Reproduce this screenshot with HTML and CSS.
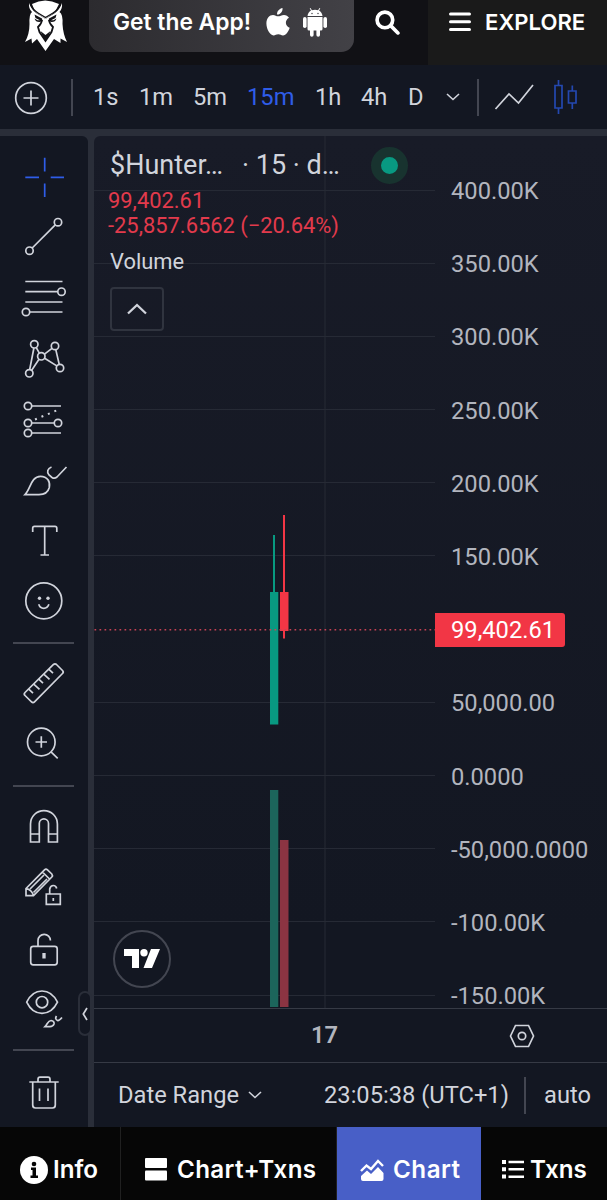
FILE: index.html
```
<!DOCTYPE html>
<html lang="en">
<head>
  <meta charset="UTF-8">
  <meta name="viewport" content="width=device-width, initial-scale=1">
  <title>$Hunter Chart</title>
  <link rel="stylesheet" href="styles.css">
</head>
<body>

  <header class="header">
    <svg class="logo" viewBox="0 0 44 54">
      <path fill="#fff" d="M8 4 Q21 -3 35 4 L31 12 L21.500 19 L11 12Z"/>
      <path fill="#fff" d="M5 3 Q7 9 12 13 L21.500 19 L31 13 Q36 9 38 3 Q38.500 9 35.500 12 Q39 14 38.500 24 Q39 34 43 42 L36.500 38.500 V43 L30 39 L21.500 51 L13 39 L8 43.500 L7.500 38.500 L1 42 Q5.500 34 5.500 24 Q5 14 8 12 Q4.500 9 5 3Z"/>
      <path fill="none" stroke="#111115" stroke-width="1.3" d="M6.500 4 Q9 10 14 13 L21.500 17.500 L29 13 Q34 10 36.500 4"/>
      <path fill="#111115" d="M10.500 14.500 L18 18.500 L18.500 21 L15.500 22 Q11.500 22 10.500 18.500 L13.500 20.300 H16 L11.500 18Z M32.500 14.500 L25 18.500 L24.500 21 L27.500 22 Q31.500 22 32.500 18.500 L29.500 20.300 H27 L31.500 18Z"/>
      <path fill="none" stroke="#111115" stroke-width="1.8" d="M18 20 Q17.500 24 14 27 L15.500 32 L21.500 41 L27.500 32 L29 27 Q25.500 24 25 20"/>
      <path fill="#111115" d="M16.500 31 L21.500 35 L26.500 31 L24 37 L21.500 41 L19 37Z"/>
    </svg>
    <a class="app-button">
      <span class="app-label">Get the App!</span>
      <svg class="apple" viewBox="0 0 24 28"><path d="M16.500 0 C17 3.500 14 7 11 6.500 C11 3 13.500 .8 16.500 0Z M12 8.300 C14 8.300 15.500 6.900 18 6.900 C20 6.900 22 8 23 9.700 C18.500 12.200 19 18 23.700 19.800 C22.500 23.500 20 27.400 17 27.400 C15 27.400 14.500 26.200 12.300 26.200 C10 26.200 9.500 27.400 7.500 27.400 C4 27.400 .4 21 .4 15.500 C.4 10 3.500 6.900 7 6.900 C9 6.900 10.500 8.300 12 8.300Z"/></svg>
      <svg class="android" viewBox="0 0 26 29"><path d="M5.500 8 Q6 4 9 2.500 L7.700 .5 L8.500 0 L9.900 2.200 Q13 1.200 16.100 2.200 L17.500 0 L18.300 .5 L17 2.500 Q20 4 20.500 8Z M5.500 9 H20.500 V21 Q20.500 22.500 19 22.500 H18 V27 A1.800 1.800 0 0 1 14.400 27 V22.500 H11.600 V27 A1.800 1.800 0 0 1 8 27 V22.500 H7 Q5.500 22.500 5.500 21Z"/><rect x="1" y="9" width="3.600" height="11" rx="1.800"/><rect x="21.400" y="9" width="3.600" height="11" rx="1.800"/><circle cx="10" cy="5.500" r=".7" fill="#3a3a3f"/><circle cx="16" cy="5.500" r=".7" fill="#3a3a3f"/></svg>
    </a>
    <svg class="search" viewBox="0 0 24 24"><circle cx="9.500" cy="9.500" r="7.500"/><path d="M15 15 L22 22"/></svg>
    <a class="explore">
      <svg class="burger" viewBox="0 0 22 20"><path d="M1.500 2 H20.500 M1.500 9.700 H20.500 M1.500 17.500 H20.500"/></svg>
      <span>EXPLORE</span>
    </a>
  </header>

  <div class="toolbar">
    <svg class="add" viewBox="0 0 34 34"><circle cx="17" cy="17" r="15.300"/><path d="M9.500 17 H24.500 M17 9.500 V24.500"/></svg>
    <i class="divider"></i>
    <div class="intervals">
      <span>1s</span><span>1m</span><span>5m</span><span class="active">15m</span><span>1h</span><span>4h</span><span>D</span>
      <svg class="chevron" viewBox="0 0 14 8"><path d="M1 1 L7 6.500 L13 1"/></svg>
    </div>
    <i class="divider"></i>
    <svg class="line-type" viewBox="0 0 40 28"><path d="M1.500 26 L15 11 L24.500 20 L39 2"/></svg>
    <svg class="candle-type" viewBox="0 0 26 36"><path d="M2 6.500 H9 V29 H2Z M5.500 1 V6.500 M5.500 29 V35 M15.500 12 H23 V24 H15.500Z M19.300 6.500 V12 M19.300 24 V30"/></svg>
  </div>

  <main class="workspace">
    <aside class="rail">
      <svg class="cross" viewBox="0 0 88 60.700"><path d="M44.700 10.700 V24.400 M44.700 36.400 V50.100 M25.300 30.400 H39 M50.700 30.400 H64"/></svg>
      <svg viewBox="0 0 88 60.700"><circle cx="58" cy="15.200" r="3.700"/><circle cx="29.500" cy="43.700" r="3.700"/><path d="M32.200 41 L55.300 17.900"/></svg>
      <svg viewBox="0 0 88 60.700"><path d="M25.300 13.500 H62.500 M25.300 23.700 H57.700 M25.300 34 H62.500 M29.800 44 H62.500"/><circle cx="61.500" cy="23.700" r="3.700"/><circle cx="26" cy="44" r="3.700"/></svg>
      <svg viewBox="0 0 88 60.700"><path d="M33.900 19 L29.700 40.500 M36.300 18.600 L39.300 24.200 M44.500 25.200 L52 19.300 M55.800 20.600 L59.200 35.200 M44.600 29.300 L56.800 36.900 M39 30.300 L31.700 41.200"/><circle cx="34.300" cy="15.300" r="3.700"/><circle cx="55" cy="17" r="3.700"/><circle cx="41.300" cy="27.300" r="3.700"/><circle cx="29.300" cy="44.300" r="3.700"/><circle cx="60" cy="39" r="3.700"/></svg>
      <svg viewBox="0 0 88 60.700"><path d="M31.700 17 H61 M31.700 34 H54.300 M31.700 44 H61"/><path stroke-dasharray="2 5" stroke-width="2" d="M35 30.500 L60 20"/><circle cx="28" cy="17" r="3.700"/><circle cx="28" cy="34" r="3.700"/><circle cx="58" cy="34" r="3.700"/><circle cx="28" cy="44" r="3.700"/></svg>
      <svg viewBox="0 0 88 60.700"><path d="M25 44.600 C30.500 39 31 26.500 40.500 26.300 C47.500 26.300 50.500 32 49.300 37.500 C48 42.500 44 44.600 39 44.600Z M51.500 17 C47.500 18.500 46.500 22 49 25 L52 27.500 C53.500 28.500 55.500 28.300 57 27 L66.500 17"/></svg>
      <svg viewBox="0 0 88 60.700"><path d="M32.700 21 V17 Q32.700 15.300 34.500 15.300 H55 Q56.800 15.300 56.800 17 V21 M44.700 15.300 V44 M40.500 44 H49"/></svg>
      <svg viewBox="0 0 88 60.700"><circle cx="43.800" cy="29.800" r="18"/><path d="M38.700 33.300 Q40 37.300 43.800 37.300 Q47.500 37.300 48.900 33.300"/><circle class="solid" cx="39.500" cy="27.300" r="1.700"/><circle class="solid" cx="48" cy="27.300" r="1.700"/></svg>
      <hr>
      <svg viewBox="0 0 88 60.700"><path d="M25 39.500 L53.500 11.500 Q55 10.200 56.500 11.500 L62.500 17.500 Q64 19 62.500 20.500 L34.500 48.800 Q33 50.200 31.500 48.800 L25 42.500 Q23.500 41 25 39.500Z M29 36.500 L33 40.200 M34 31.500 L39.500 36.500 M39 26.500 L43 30.200 M44 21.500 L49.500 26.500 M49 16.500 L53 20.200"/></svg>
      <svg viewBox="0 0 88 60.700"><circle cx="41.300" cy="28" r="13.800"/><path d="M35.500 28 H47 M41.300 22.300 V33.700 M51 38 L57.700 44.300"/></svg>
      <hr>
      <svg viewBox="0 0 88 60.700"><path d="M30.500 46 V28 A13.400 13.400 0 0 1 57.400 28 V46 H48.500 V27.500 A4.600 4.600 0 0 0 39.300 27.500 V46Z M30.500 38 H39.300 M48.500 38 H57.400"/></svg>
      <svg viewBox="0 0 88 60.700"><path d="M26 38.700 V31.500 L44.500 12.800 Q46 11.500 47.500 12.800 L51.800 17 Q53 18.500 51.800 20 L33.500 38.700Z M26.500 31.500 Q31.500 33 33.500 38.200 M42.500 15 L49.500 22 M30 32 L44 18 M33.500 35.500 L47 22 M46.300 37 H60.300 V47.300 H46.300Z M49.700 37 V32 Q50.500 28.500 53.300 28.500 Q56 28.500 56.700 31.500 M53.300 41 V44"/></svg>
      <svg viewBox="0 0 88 60.700"><rect x="30.700" y="28.300" width="26.500" height="18.500" rx="2.500"/><path d="M38 28 V22.500 A6.200 6.200 0 0 1 50.400 22.500"/><path stroke-width="3.300" d="M44 35 V40.500"/></svg>
      <svg viewBox="0 0 88 60.700"><path d="M26.700 24.200 Q32 13 42 13 Q52 13 57.500 24.200 Q52 35.400 42 35.400 Q32 35.400 26.700 24.200Z"/><circle cx="42" cy="24.200" r="5.700"/><path d="M45 48.600 C47.500 46 48 42.500 51 42.500 Q54.500 43 54 46 Q53 48.600 50 48.600Z M56.500 38 Q54.500 41 57.500 42.500 Q59 43 62 39.500"/></svg>
      <hr>
      <svg class="trash" viewBox="0 0 88 60.700"><path d="M29.300 20 H58.700 M38 20 V17.500 Q38 15.200 40 15.200 H48 Q50 15.200 50 17.500 V20 M32.700 20 V43 Q32.700 46 35.500 46 H52.500 Q55.300 46 55.300 43 V20 M39.500 26.500 V39 M48 26.500 V39"/></svg>
      <div class="collapse"><svg viewBox="0 0 6 14"><path d="M5 1 L1.300 7 L5 13"/></svg></div>
    </aside>

    <section class="chart">
      <div class="panes">
        <div class="plot">
          <svg class="canvas" viewBox="94 136 341 872">
            <path class="grid" d="M94 190.500 H435 M94 263.500 H435 M94 336.500 H435 M94 409.500 H435 M94 482.500 H435 M94 555.500 H435 M94 702.500 H435 M94 775.500 H435 M94 848.500 H435 M94 921.500 H435 M94 995.500 H435 M325 136 V1008"/>
            <rect class="vol-up" x="270" y="790" width="8.300" height="217"/>
            <rect class="vol-down" x="280" y="840" width="8.500" height="167"/>
            <rect class="up" x="273" y="535" width="2" height="60"/>
            <rect class="up" x="270" y="592" width="8.300" height="132.500"/>
            <rect class="down" x="283" y="515" width="2" height="123.500"/>
            <rect class="down" x="280" y="592" width="8.500" height="39"/>
            <path class="last" d="M94.500 629.700 H435"/>
          </svg>
          <div class="legend">
            <div class="symbol"><span class="name">$Hunter…</span><span class="res">· 15 · d…</span><i class="status"></i></div>
            <div class="quote">99,402.61</div>
            <div class="quote">-25,857.6562 (−20.64%)</div>
            <div class="volume">Volume</div>
            <div class="toggle"><svg viewBox="0 0 20 12"><path d="M1 10.500 L10 2 L19 10.500"/></svg></div>
          </div>
          <div class="tv">
            <svg viewBox="0 0 36 20"><path d="M0 0 H15 V19 H8 V7 H0Z M27 0 H36 L28 19 H19.500Z"/><circle cx="20" cy="3.700" r="3.700"/></svg>
          </div>
        </div>
        <div class="prices">
          <span>400.00K</span>
          <span>350.00K</span>
          <span>300.00K</span>
          <span>250.00K</span>
          <span>200.00K</span>
          <span>150.00K</span>
          <span><b>99,402.61</b></span>
          <span>50,000.00</span>
          <span>0.0000</span>
          <span>-50,000.0000</span>
          <span>-100.00K</span>
          <span>-150.00K</span>
        </div>
      </div>
      <div class="time-axis">
        <strong>17</strong>
        <svg viewBox="0 0 26 24"><path d="M1.500 12 L6.500 1.500 H19.500 L24.500 12 L19.500 22.500 H6.500Z"/><circle cx="13" cy="12" r="3.700"/></svg>
      </div>
      <div class="range-bar">
        <span class="range">Date Range</span>
        <svg class="chevron" viewBox="0 0 14 8"><path d="M1 1 L7 6.500 L13 1"/></svg>
        <span class="clock">23:05:38 (UTC+1)</span>
        <i class="divider"></i>
        <span class="auto">auto</span>
      </div>
    </section>
  </main>

  <nav class="tabs">
    <a class="info"><svg viewBox="0 0 28 28"><circle cx="14" cy="14" r="14"/><path fill="#060606" d="M11 11.500 H16 V19.500 H18 V22 H10.500 V19.500 H12.500 V14 H11Z"/><circle cx="14" cy="8" r="2.300" fill="#060606"/></svg><span>Info</span></a>
    <a class="both"><svg viewBox="0 0 22 23"><rect width="22" height="10" rx="1"/><rect y="12.500" width="22" height="10" rx="1"/></svg><span>Chart+Txns</span></a>
    <a class="single"><svg viewBox="0 0 24 22"><path d="M1 20 V17 L7 11.500 L11 15 L18 8 L23.500 14 V20 Q23.500 22 21.500 22 H3 Q1 22 1 20Z"/><path class="stroke" d="M1 12 L6.500 6.500 L11 10 L18 2 L23 7"/></svg><span>Chart</span></a>
    <a class="txns"><svg viewBox="0 0 22 19"><path d="M0 0 H4 V4 H0Z M0 7.300 H4 V11.300 H0Z M0 14.600 H4 V18.600 H0Z M6.500 .8 H22 V3.300 H6.500Z M6.500 8.100 H22 V10.600 H6.500Z M6.500 15.400 H22 V17.900 H6.500Z"/></svg><span>Txns</span></a>
  </nav>

</body>
</html>
```
FILE: styles.css
```
:root {
  --panel: #131722;
  --gutter: #2a2e39;
  --text: #d1d4dc;
  --muted: #b2b5be;
  --blue: #2f5de8;
  --red: #f23645;
  --green: #089981;
}

* {
  box-sizing: border-box;
}

body {
  margin: 0;
  width: 607px;
  height: 1200px;
  overflow: hidden;
  display: flex;
  flex-direction: column;
  background: #060606;
  color: var(--text);
  font: 23.7px/26px Roboto, sans-serif;
}

svg {
  display: block;
  flex: none;
}

/* header */
.header {
  display: flex;
  height: 65px;
  background: #111115;
  color: #fff;
  fill: #fff;
  font: 600 22.8px/1 Inter, sans-serif;
}
.logo {
  width: 44px;
  height: 54px;
  margin-left: 24px;
}
.app-button {
  display: flex;
  width: 265px;
  height: 52px;
  margin-left: 21px;
  padding: 0 0 8px 24px;
  align-items: center;
  border-radius: 0 0 13px 13px;
  background: linear-gradient(90deg, #2c2b2f, #424146);
}
.app-label {
  width: 153px;
  white-space: nowrap;
}
.apple {
  width: 24px;
  height: 28px;
}
.android {
  width: 26px;
  height: 29px;
  margin-left: 12px;
}
.search {
  width: 25px;
  height: 25px;
  margin: 10px 0 0 21px;
  fill: none;
  stroke: #fff;
  stroke-width: 3.5;
  stroke-linecap: round;
}
.explore {
  display: flex;
  flex: 1;
  margin-left: 28px;
  padding: 0 0 21px 21px;
  align-items: center;
  gap: 14px;
  background: #1a1a1a;
  font-size: 22.1px;
}
.burger {
  width: 22px;
  height: 20px;
  stroke: #fff;
  stroke-width: 3;
  stroke-linecap: round;
}

/* top toolbar */
.toolbar {
  display: flex;
  height: 64px;
  align-items: center;
  background: var(--panel);
  fill: none;
  stroke: var(--text);
  stroke-width: 1.7;
}
.add {
  width: 34px;
  height: 34px;
  margin: 1px 23px 0 14px;
}
.divider {
  width: 2px;
  height: 37px;
  background: #434651;
}
.intervals {
  display: grid;
  grid-template-columns: 46px 54px 54px 68px 46px 47px 38px 31px;
  align-items: center;
  margin-left: 20px;
}
.active {
  color: var(--blue);
}
.chevron {
  width: 14px;
  height: 8px;
  fill: none;
  stroke: var(--text);
  stroke-width: 1.6;
}
.line-type {
  width: 40px;
  height: 28px;
  margin-left: 15px;
}
.candle-type {
  width: 26px;
  height: 36px;
  margin-left: 19px;
  stroke: #2448b0;
}

/* chart workspace */
.workspace {
  display: flex;
  height: 998px;
  padding-top: 7px;
  gap: 6px;
  background: var(--gutter);
}
.rail {
  position: relative;
  width: 88px;
  padding-top: 10.6px;
  border-radius: 0 6px 0 0;
  background: var(--panel);
  fill: none;
  stroke: var(--text);
  stroke-width: 1.7;
}
.rail > svg {
  width: 88px;
  height: 60.7px;
}
.rail .cross {
  stroke: var(--blue);
}
.rail .solid {
  fill: var(--text);
  stroke: none;
}
.rail hr {
  width: 61px;
  height: 2px;
  margin: 9.7px 13px;
  border: 0;
  background: #434651;
}
.rail .trash {
  margin-top: 11.7px;
}
.collapse {
  position: absolute;
  left: 78px;
  top: 855px;
  z-index: 1;
  display: grid;
  width: 14px;
  height: 45px;
  place-items: center;
  border: 2px solid var(--gutter);
  border-radius: 7px;
  background: var(--panel);
}
.collapse svg {
  width: 6px;
  height: 14px;
}

.chart {
  display: flex;
  flex: 1;
  flex-direction: column;
  border-radius: 6px 0 0 0;
  background: linear-gradient(#181b27, #131722 80%);
}
.panes {
  display: flex;
  height: 873px;
  border-bottom: 1px solid #363a45;
}
.plot {
  position: relative;
  width: 341px;
}
.canvas {
  width: 341px;
  height: 872px;
}
.grid {
  stroke: #262a35;
}
.up {
  fill: var(--green);
}
.down {
  fill: var(--red);
}
.vol-up {
  fill: #1c655b;
}
.vol-down {
  fill: #8b3442;
}
.last {
  stroke: #c94355;
  stroke-width: 1.6;
  stroke-dasharray: 1.7 3.3;
}

.legend {
  position: absolute;
  left: 14px;
  top: 9px;
}
.symbol {
  display: flex;
  height: 40px;
  align-items: center;
  padding-left: 2px;
  font-size: 27px;
  line-height: 28px;
}
.name {
  width: 132px;
}
.res {
  width: 129px;
}
.status {
  width: 37px;
  height: 37px;
  border: 10px solid #18332f;
  border-radius: 50%;
  background: var(--green);
}
.quote {
  height: 25px;
  color: #e23a4c;
  font-size: 21.9px;
  line-height: 32px;
}
.volume {
  margin: 14px 2px 12px;
  font-size: 21.9px;
  line-height: 26px;
}
.toggle {
  display: grid;
  width: 54px;
  height: 44px;
  margin-left: 2px;
  place-items: center;
  border: 2px solid #30343f;
  border-radius: 4px;
}
.toggle svg {
  width: 20px;
  height: 12px;
  fill: none;
  stroke: var(--text);
  stroke-width: 2.3;
}
.tv {
  position: absolute;
  left: 19px;
  top: 794px;
  display: grid;
  width: 58px;
  height: 58px;
  place-items: center;
  border: 2px solid #434651;
  border-radius: 50%;
  background: var(--panel);
}
.tv svg {
  width: 36px;
  height: 20px;
  fill: #fff;
}

.prices {
  padding-top: 18.5px;
  color: var(--muted);
}
.prices span {
  display: flex;
  height: 73.2px;
  padding-left: 16px;
  align-items: center;
}
.prices b {
  width: 130px;
  margin-left: -16px;
  padding-left: 16px;
  border-radius: 0 3px 3px 0;
  background: var(--red);
  color: #fff;
  font-weight: 400;
  line-height: 34px;
}

.time-axis {
  display: flex;
  height: 54px;
  align-items: center;
  border-bottom: 1px solid #363a45;
  color: var(--muted);
}
.time-axis strong {
  width: 198px;
  margin-left: 217px;
  padding-bottom: 2px;
  font-weight: 600;
}
.time-axis svg {
  width: 26px;
  height: 24px;
  fill: none;
  stroke: var(--text);
  stroke-width: 1.7;
}

.range-bar {
  display: flex;
  flex: 1;
  align-items: center;
  padding-left: 24px;
}
.range {
  width: 130px;
}
.clock {
  width: 200px;
  margin-left: 62px;
}
.auto {
  margin-left: 18px;
}

/* bottom navigation */
.tabs {
  display: flex;
  height: 73px;
  color: #fff;
  fill: #fff;
  font: 600 24.2px/1 Inter, sans-serif;
}
.tabs a {
  display: flex;
  align-items: center;
  padding-top: 12px;
  border-right: 1px solid #202020;
}
.tabs span {
  padding-top: 2px;
}
.tabs .info {
  width: 121px;
  padding-left: 20px;
  gap: 5px;
}
.tabs .both {
  width: 216px;
  padding-left: 24px;
  gap: 10px;
  letter-spacing: 0.35px;
}
.tabs .single {
  width: 144px;
  padding-left: 23px;
  gap: 9px;
  border: 0;
  background: #485fc7;
  letter-spacing: 0.5px;
}
.tabs .txns {
  flex: 1;
  padding-left: 21px;
  gap: 6px;
  border: 0;
}
.info svg {
  width: 28px;
  height: 28px;
}
.both svg {
  width: 22px;
  height: 23px;
}
.single svg {
  width: 24px;
  height: 22px;
}
.single .stroke {
  fill: none;
  stroke: #fff;
  stroke-width: 2.4;
}
.txns svg {
  width: 22px;
  height: 19px;
}
```
